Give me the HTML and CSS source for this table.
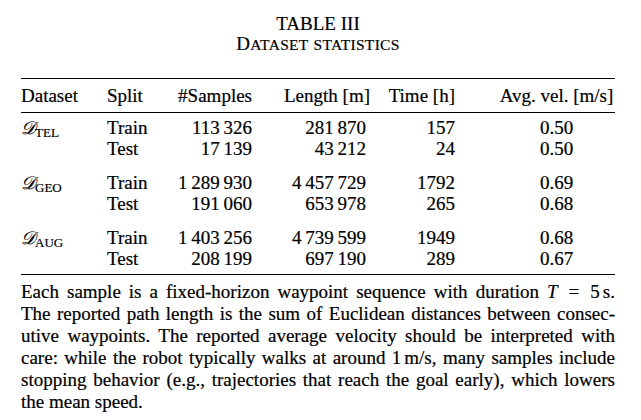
FILE: index.html
```html
<!DOCTYPE html>
<html>
<head>
<meta charset="utf-8">
<link rel="stylesheet" href="styles.css">
</head>
<body>
<div class="page">
  <div class="caption">
    <div class="cap-num">TABLE III</div>
    <div class="cap-title"><span class="sc-big">D</span>ATASET <span class="sc-gap"></span>STATISTICS</div>
  </div>
  <table class="stats">
    <colgroup>
      <col class="c1"><col class="c2"><col class="c3"><col class="c4"><col class="c5"><col class="c6">
    </colgroup>
    <thead>
      <tr>
        <th class="l">Dataset</th><th class="l">Split</th><th class="r">#Samples</th><th class="r">Length [m]</th><th class="r">Time [h]</th><th class="c">Avg. vel. [m/s]</th>
      </tr>
    </thead>
    <tbody class="grp first">
      <tr><td class="l"><span class="cal">𝒟</span><sub class="ds">TEL</sub></td><td class="l">Train</td><td class="r">113&#8239;326</td><td class="r n4">281&#8239;870</td><td class="r">157</td><td class="c">0.50</td></tr>
      <tr><td></td><td class="l">Test</td><td class="r">17&#8239;139</td><td class="r n4">43&#8239;212</td><td class="r">24</td><td class="c">0.50</td></tr>
    </tbody>
    <tbody class="grp">
      <tr><td class="l"><span class="cal">𝒟</span><sub class="ds">GEO</sub></td><td class="l">Train</td><td class="r">1&#8239;289&#8239;930</td><td class="r n4">4&#8239;457&#8239;729</td><td class="r">1792</td><td class="c">0.69</td></tr>
      <tr><td></td><td class="l">Test</td><td class="r">191&#8239;060</td><td class="r n4">653&#8239;978</td><td class="r">265</td><td class="c">0.68</td></tr>
    </tbody>
    <tbody class="grp last">
      <tr><td class="l"><span class="cal">𝒟</span><sub class="ds">AUG</sub></td><td class="l">Train</td><td class="r">1&#8239;403&#8239;256</td><td class="r n4">4&#8239;739&#8239;599</td><td class="r">1949</td><td class="c">0.68</td></tr>
      <tr><td></td><td class="l">Test</td><td class="r">208&#8239;199</td><td class="r n4">697&#8239;190</td><td class="r">289</td><td class="c">0.67</td></tr>
    </tbody>
  </table>
  <div class="note">
    <span class="ln">Each sample is a fixed-horizon waypoint sequence with duration <i class="m">T</i> <span class="eq">=</span> 5<span class="th"></span>s.</span>
    <span class="ln">The reported path length is the sum of Euclidean distances between consec-</span>
    <span class="ln">utive waypoints. The reported average velocity should be interpreted with</span>
    <span class="ln">care: while the robot typically walks at around 1<span class="th"></span>m/s, many samples include</span>
    <span class="ln">stopping behavior (e.g., trajectories that reach the goal early), which lowers</span>
    <span class="ln end">the mean speed.</span>
  </div>
</div>
</body>
</html>
```
FILE: styles.css
```css
html, body {
  margin: 0;
  padding: 0;
  background: #ffffff;
}
body {
  font-family: "Liberation Serif", "Times New Roman", serif;
  color: #000;
  width: 641px;
  height: 420px;
  overflow: hidden;
  -webkit-text-stroke: 0.2px #000;
}
.page {
  padding: 14px 26px 0 21px;
}
.caption {
  width: 594px;
  text-align: center;
  font-size: 19px;
  line-height: 20px;
}
.cap-num {
  height: 20px;
}
.cap-title {
  font-size: 15.5px;
  letter-spacing: 0.3px;
}
.sc-big {
  font-size: 19px;
}
.sc-gap {
  display: inline-block;
  width: 1px;
}
.stats {
  margin-top: 23px;
  width: 594px;
  border-collapse: collapse;
  table-layout: fixed;
  font-size: 19px;
  line-height: 21.5px;
}
.c1 { width: 86px; }
.c2 { width: 70px; }
.c3 { width: 75px; }
.c4 { width: 118px; }
.c5 { width: 85px; }
.c6 { width: 160px; }
.stats th, .stats td {
  padding: 0;
  font-weight: normal;
  white-space: nowrap;
}
.stats thead tr {
  border-top: 1.5px solid #000;
  border-bottom: 1px solid #000;
}
.stats th {
  padding-top: 6px;
  padding-bottom: 5px;
}
.l { text-align: left; }
.r { text-align: right; }
.c { text-align: center; }
.stats td.n4 {
  padding-right: 4px;
}
.stats th.c, .stats td.c {
  padding-left: 43px;
}
.grp tr:first-child td { padding-top: 12px; }
.grp.first tr:first-child td { padding-top: 4px; }
.grp.last tr:last-child td { padding-bottom: 4px; }
.grp.last { border-bottom: 1.5px solid #000; }
.cal {
  font-family: "DejaVu Serif", "DejaVu Sans", serif;
  font-style: italic;
  font-size: 18px;
}
.ds {
  font-size: 13px;
  vertical-align: -3px;
  line-height: 0;
}
.note {
  width: 594px;
  margin-top: 6px;
  font-size: 19px;
  line-height: 22px;
}
.ln {
  display: block;
  text-align: justify;
  text-align-last: justify;
}
.ln.end {
  text-align-last: left;
}
.m {
  font-style: italic;
}
.eq {
  margin: 0 3px;
}
.th {
  display: inline-block;
  width: 3px;
}
```
